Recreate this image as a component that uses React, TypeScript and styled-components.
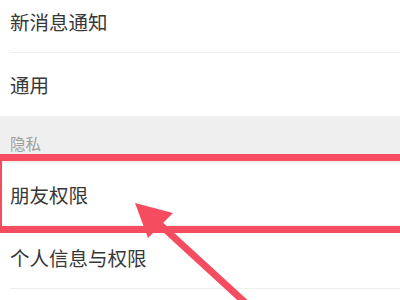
import React from "react";
import styled, { createGlobalStyle } from "styled-components";

const GlobalStyle = createGlobalStyle`
  html, body {
    margin: 0;
    padding: 0;
    background: #ffffff;
  }
  body {
    width: 400px;
    height: 300px;
    overflow: hidden;
    font-family: "Noto Sans CJK SC", "Noto Sans", sans-serif;
  }
`;

const Page = styled.div`
  position: relative;
  width: 400px;
  height: 300px;
  overflow: hidden;
  background: #ffffff;
`;

const List = styled.div`
  display: flex;
  flex-direction: column;
  margin-top: -10px;
`;

const Row = styled.div`
  height: 63px;
  padding-left: 10px;
  background: #ffffff;
  display: flex;
`;

const RowInner = styled.div<{ $divider: boolean }>`
  flex: 1;
  display: flex;
  align-items: center;
  border-bottom: 1px solid ${(p) => (p.$divider ? "#eeeeee" : "transparent")};
  font-size: 19.5px;
  color: #383838;
  padding-top: 1px;
`;

const SectionHeader = styled.div`
  height: 47px;
  background: #efefef;
  padding-left: 10px;
  box-sizing: border-box;
  display: flex;
  align-items: flex-end;
  padding-bottom: 9px;
  font-size: 15.5px;
  color: #a0a0a0;
`;

const Highlight = styled.div`
  position: absolute;
  left: -5px;
  top: 154px;
  width: 460px;
  height: 79px;
  box-sizing: border-box;
  border: 7px solid #f64c60;
  pointer-events: none;
`;

const ArrowSvg = styled.svg`
  position: absolute;
  left: 0;
  top: 0;
  pointer-events: none;
`;

type Item = { label: string; divider: boolean };

const topItems: Item[] = [
  { label: "新消息通知", divider: true },
  { label: "通用", divider: false },
];

const privacyItems: Item[] = [
  { label: "朋友权限", divider: true },
  { label: "个人信息与权限", divider: true },
];

export default function App() {
  return (
    <>
      <GlobalStyle />
      <Page>
        <List>
          {topItems.map((it) => (
            <Row key={it.label}>
              <RowInner $divider={it.divider}>{it.label}</RowInner>
            </Row>
          ))}
          <SectionHeader>隐私</SectionHeader>
          {privacyItems.map((it) => (
            <Row key={it.label}>
              <RowInner $divider={it.divider}>{it.label}</RowInner>
            </Row>
          ))}
        </List>
        <Highlight />
        <ArrowSvg width="400" height="300" viewBox="0 0 400 300">
          <line
            x1="155"
            y1="220"
            x2="262"
            y2="318"
            stroke="#f64c60"
            strokeWidth="7"
          />
          <polygon points="135,203 173,213 148,238" fill="#f64c60" />
        </ArrowSvg>
      </Page>
    </>
  );
}
